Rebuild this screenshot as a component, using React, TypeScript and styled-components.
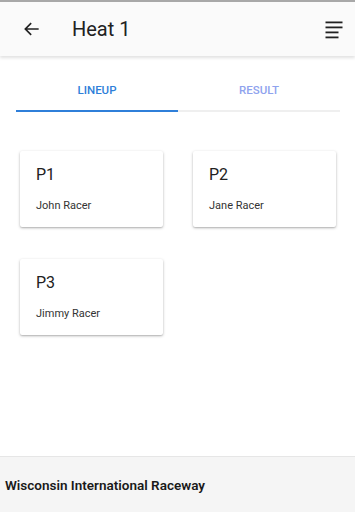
import styled, { createGlobalStyle } from 'styled-components'

const GlobalStyle = createGlobalStyle`
  html, body {
    margin: 0;
    padding: 0;
    background: #ffffff;
    font-family: Roboto, "Noto Sans", Arial, sans-serif;
  }
`

const Page = styled.div`
  display: flex;
  flex-direction: column;
  height: 512px;
  width: 355px;
  overflow: hidden;
`

const Header = styled.header`
  display: flex;
  align-items: center;
  height: 56px;
  border-top: 2px solid #a8a8a8;
  background: #fafafa;
  box-shadow: 0 2px 3px rgba(0, 0, 0, 0.12);
  padding: 0 11px 0 22px;
  box-sizing: border-box;
  position: relative;
  z-index: 1;
`

const IconButton = styled.button`
  display: flex;
  align-items: center;
  justify-content: center;
  width: 20px;
  height: 20px;
  padding: 0;
  border: none;
  background: none;
  color: #212121;
`

const Title = styled.h1`
  flex: 1;
  margin: 0 0 0 30px;
  font-size: 20px;
  font-weight: 400;
  color: #212121;
`

const Tabs = styled.div`
  display: flex;
  margin: 14px 15px 0 16px;
`

const Tab = styled.div<{ $active?: boolean }>`
  flex: 1;
  height: 40px;
  display: flex;
  align-items: center;
  justify-content: center;
  font-size: 11.5px;
  font-weight: 500;
  color: ${(p) => (p.$active ? '#2f7fd9' : '#8fa3ee')};
  border-bottom: 2px solid ${(p) => (p.$active ? '#2f7fd9' : '#efefef')};
`

const Grid = styled.div`
  display: grid;
  grid-template-columns: 143px 143px;
  align-content: start;
  column-gap: 30px;
  row-gap: 32px;
  padding: 39px 0 0 20px;
  flex: 1;
`

const Card = styled.div`
  height: 76px;
  box-sizing: border-box;
  padding: 15px 16px 0 16px;
  background: #ffffff;
  border-radius: 2px;
  box-shadow: 0 1px 3px rgba(0, 0, 0, 0.28), 0 1px 1px rgba(0, 0, 0, 0.08);
`

const Position = styled.div`
  font-size: 16px;
  color: #212121;
  line-height: 18px;
`

const Racer = styled.div`
  margin-top: 15px;
  font-size: 11px;
  color: #333333;
`

const Footer = styled.footer`
  height: 55px;
  display: flex;
  align-items: center;
  padding-left: 5px;
  background: #f5f5f5;
  border-top: 1px solid #e6e6e6;
  font-size: 13.5px;
  font-weight: 600;
  color: #1a1a1a;
`

const lineup = [
  { pos: 'P1', name: 'John Racer' },
  { pos: 'P2', name: 'Jane Racer' },
  { pos: 'P3', name: 'Jimmy Racer' },
]

const App = () => {
  return (
    <Page>
      <GlobalStyle />
      <Header>
        <IconButton aria-label="back">
          <svg width="20" height="20" viewBox="0 0 24 24">
            <path d="M20 12H4.5M11 5l-7 7 7 7" stroke="#212121" strokeWidth="2" fill="none" />
          </svg>
        </IconButton>
        <Title>Heat 1</Title>
        <IconButton aria-label="menu">
          <svg width="20" height="20" viewBox="0 0 20 20">
            <rect x="1.5" y="2.5" width="17" height="1.8" fill="#212121" />
            <rect x="1.5" y="7.5" width="17" height="1.8" fill="#212121" />
            <rect x="1.5" y="12.5" width="13" height="1.8" fill="#212121" />
            <rect x="1.5" y="17.5" width="13" height="1.8" fill="#212121" />
          </svg>
        </IconButton>
      </Header>
      <Tabs>
        <Tab $active>LINEUP</Tab>
        <Tab>RESULT</Tab>
      </Tabs>
      <Grid>
        {lineup.map((r) => (
          <Card key={r.pos}>
            <Position>{r.pos}</Position>
            <Racer>{r.name}</Racer>
          </Card>
        ))}
      </Grid>
      <Footer>Wisconsin International Raceway</Footer>
    </Page>
  )
}

export default App
